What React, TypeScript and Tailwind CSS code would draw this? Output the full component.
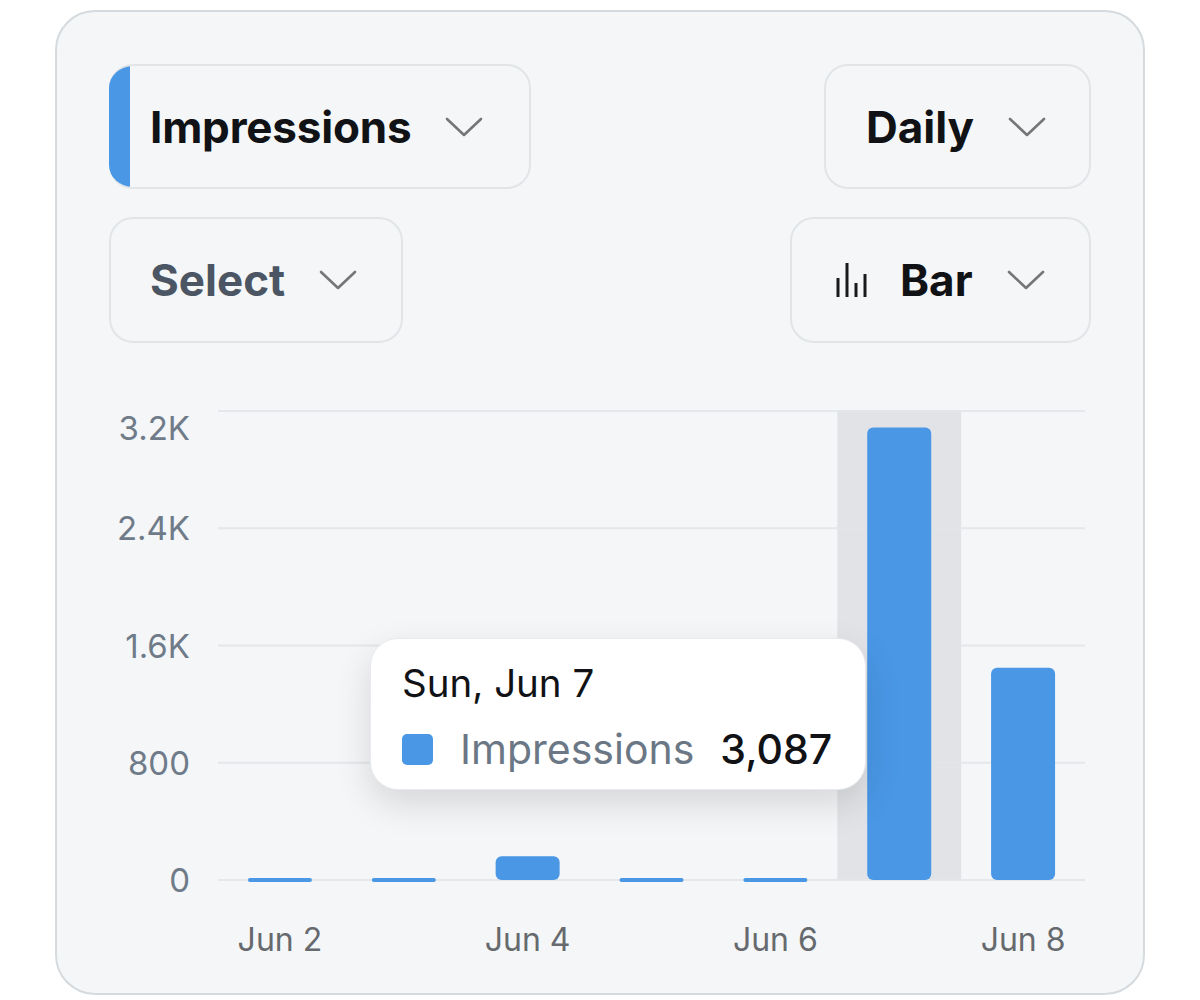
import React from "react";

const font = { fontFamily: "Inter, 'Noto Sans', sans-serif" };

const days = [
  { label: "Jun 2", value: 12, showLabel: true },
  { label: "Jun 3", value: 12, showLabel: false },
  { label: "Jun 4", value: 162, showLabel: true },
  { label: "Jun 5", value: 12, showLabel: false },
  { label: "Jun 6", value: 12, showLabel: true },
  { label: "Jun 7", value: 3087, showLabel: false },
  { label: "Jun 8", value: 1448, showLabel: true },
];

const ticks = [
  { label: "3.2K", v: 3200 },
  { label: "2.4K", v: 2400 },
  { label: "1.6K", v: 1600 },
  { label: "800", v: 800 },
  { label: "0", v: 0 },
];

function Chevron() {
  return (
    <svg width="38" height="22" viewBox="0 0 38 22" fill="none" className="shrink-0">
      <polyline points="2,3 19,19 36,3" stroke="#767676" strokeWidth="2.6" strokeLinecap="round" strokeLinejoin="round" />
    </svg>
  );
}

function BarIcon() {
  return (
    <svg width="32" height="36" viewBox="0 0 32 36" className="shrink-0">
      <g stroke="#1a1a1a" strokeWidth="3">
        <line x1="2" y1="35" x2="2" y2="16" />
        <line x1="11" y1="35" x2="11" y2="1" />
        <line x1="20" y1="35" x2="20" y2="21" />
        <line x1="29" y1="35" x2="29" y2="12" />
      </g>
    </svg>
  );
}

function Chart() {
  const left = 109;
  const right = 976;
  const top = 68;
  const base = 537;
  const colW = (right - left) / days.length;
  const barW = 64;
  const scale = (base - top) / 3200;
  const active = 5;

  return (
    <svg width="982" height="620" viewBox="0 0 982 620" className="block">
      <rect x={left + colW * active} y={top} width={colW} height={base - top} fill="#e1e3e6" />
      {ticks.map((t) => {
        const y = base - t.v * scale;
        return (
          <g key={t.label}>
            <line x1={left} x2={right} y1={y} y2={y} stroke="#e3e6ea" strokeWidth="2" opacity="0.9" />
            <text
              x="81"
              y={t.v === 3200 ? y + 17 : y}
              textAnchor="end"
              dominantBaseline="central"
              fill="#6f7b89"
              fontSize="33"
              style={font}
            >
              {t.label}
            </text>
          </g>
        );
      })}
      {days.map((d, i) => {
        const cx = left + colW * (i + 0.5);
        const h = Math.max(d.value * scale, 4);
        return (
          <g key={d.label}>
            <rect
              x={cx - barW / 2}
              y={base - h + (h <= 4 ? 2 : 0)}
              width={barW}
              height={h}
              rx={h <= 4 ? 2 : 6}
              fill="#4a97e6"
            />
            {d.showLabel && (
              <text x={cx} y="596" textAnchor="middle" dominantBaseline="central" fill="#666a6e" fontSize="32" style={font}>
                {d.label}
              </text>
            )}
          </g>
        );
      })}
    </svg>
  );
}

export default function App() {
  return (
    <div className="min-h-screen bg-white pt-[10px]" style={font}>
      <div className="ml-[55px] w-[1090px] rounded-[40px] border-2 border-[#d5dade] bg-[#f4f6f7] px-[52px] pt-[52px] pb-[30px]">
        <div className="flex justify-between">
          <div className="flex h-[125px] w-[422px] items-center overflow-hidden rounded-[24px] border-y-2 border-r-2 border-[#e2e5e8]">
            <div className="h-full w-[21px] shrink-0 bg-[#4a97e6]" />
            <span className="ml-[20px] text-[44px] font-bold tracking-[-0.2px] text-[#111215]">Impressions</span>
            <span className="ml-[34px]"><Chevron /></span>
          </div>
          <div className="flex h-[125px] w-[267px] items-center rounded-[24px] border-2 border-[#e2e5e8] pl-[40px]">
            <span className="text-[44px] font-bold text-[#111215]">Daily</span>
            <span className="ml-[34px]"><Chevron /></span>
          </div>
        </div>
        <div className="mt-[28px] flex justify-between">
          <div className="flex h-[126px] w-[294px] items-center rounded-[24px] border-2 border-[#e2e5e8] pl-[39px]">
            <span className="text-[44px] font-bold text-[#4b5563]">Select</span>
            <span className="ml-[34px]"><Chevron /></span>
          </div>
          <div className="flex h-[126px] w-[301px] items-center rounded-[24px] border-2 border-[#e2e5e8] pl-[44px]">
            <BarIcon />
            <span className="ml-[32px] text-[44px] font-bold text-[#111215]">Bar</span>
            <span className="ml-[34px]"><Chevron /></span>
          </div>
        </div>
        <div className="relative">
          <Chart />
          <div className="absolute left-[261px] top-[295px] flex h-[152px] w-[496px] flex-col justify-center gap-[26px] rounded-[28px] border border-[#e8eaed] bg-white pl-[31px] pt-[6px] shadow-[0_14px_36px_rgba(0,0,0,0.13)]">
            <div className="text-[38.5px] leading-none text-[#111215]">Sun, Jun 7</div>
            <div className="flex items-center">
              <div className="h-[31px] w-[31px] rounded-[5px] bg-[#4a97e6]" />
              <span className="ml-[27px] text-[41px] leading-none text-[#6b7785]">Impressions</span>
              <span className="ml-[26px] text-[41px] font-medium leading-none text-[#111215]">3,087</span>
            </div>
          </div>
        </div>
      </div>
    </div>
  );
}
